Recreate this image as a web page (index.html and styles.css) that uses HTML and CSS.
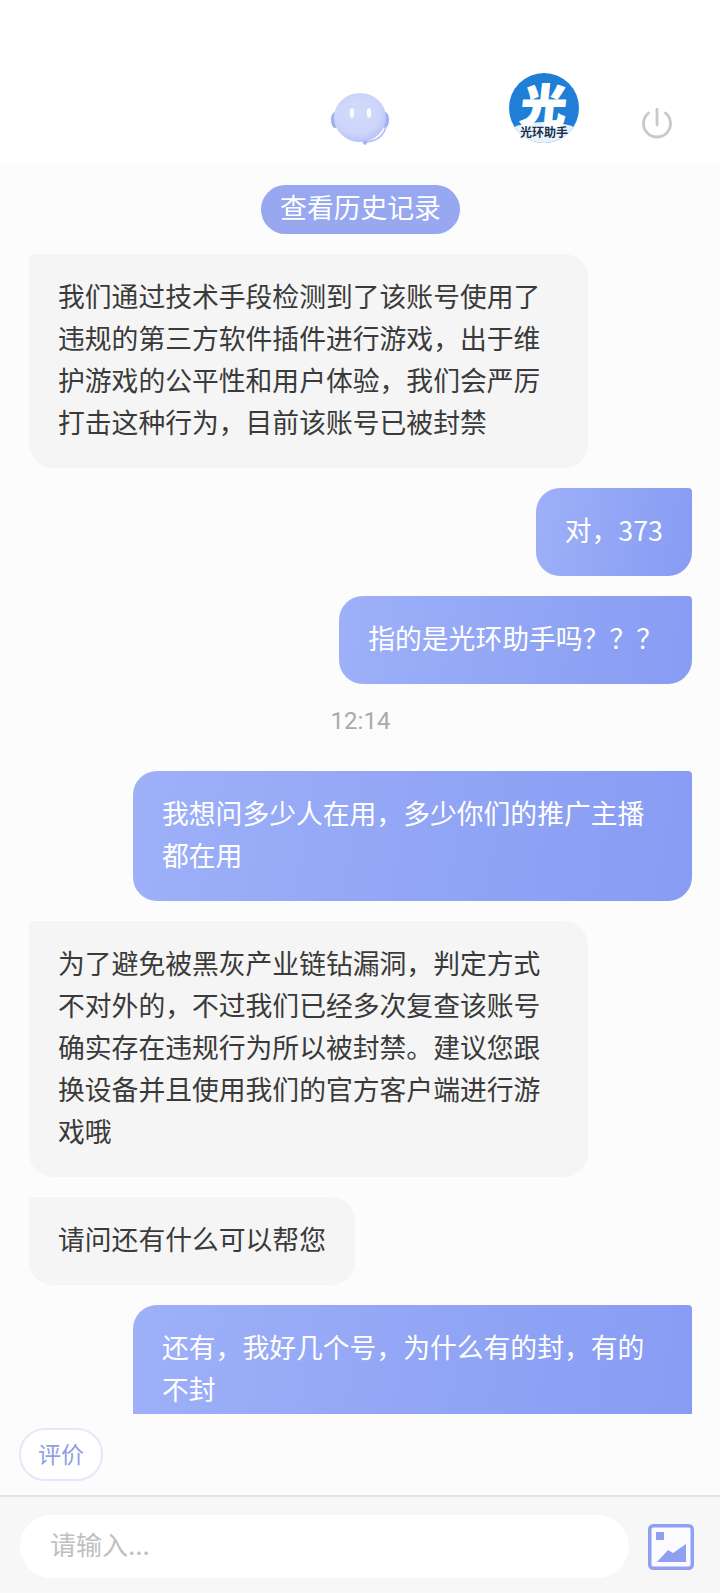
FILE: index.html
```html
<!DOCTYPE html>
<html lang="zh">
<head>
<meta charset="utf-8">
<title>客服</title>
<link rel="stylesheet" href="styles.css">
</head>
<body>
<div class="app">
  <header class="header">
    <svg class="robot" width="60" height="54" viewBox="0 0 60 54">
      <defs>
        <radialGradient id="rb" cx="45%" cy="40%" r="62%">
          <stop offset="0" stop-color="#d3dafb"/>
          <stop offset="0.7" stop-color="#ccd5fa"/>
          <stop offset="1" stop-color="#b7c3f6"/>
        </radialGradient>
      </defs>
      <ellipse cx="5" cy="28" rx="4" ry="8" fill="#9fb0f1"/>
      <ellipse cx="55" cy="28" rx="4" ry="8" fill="#9fb0f1"/>
      <path d="M56 34C54 44 46 49 36 50" fill="none" stroke="#b3c0f5" stroke-width="1.6"/>
      <ellipse cx="30" cy="25.5" rx="26" ry="24.5" fill="url(#rb)"/>
      <ellipse cx="22" cy="21" rx="2.2" ry="5" fill="#fbfbff"/>
      <ellipse cx="39" cy="21" rx="2.2" ry="5" fill="#fbfbff"/>
      <circle cx="35" cy="50.5" r="2.2" fill="#a6b5f2"/>
    </svg>
    <div class="logo">
      <div class="logo-disc"><div class="logo-band"></div></div>
      <span class="logo-mark">光</span>
      <span class="logo-name">光环助手</span>
    </div>
    <svg class="power" width="32" height="32" viewBox="0 0 32 32">
      <path d="M7.5 6A13.5 13.5 0 1 0 24.5 6" fill="none" stroke="#c9c9c9" stroke-width="2.8" stroke-linecap="round"/>
      <path d="M16 2.5V18" fill="none" stroke="#c9c9c9" stroke-width="2.8" stroke-linecap="round"/>
    </svg>
  </header>

  <main class="chat">
    <button class="history">查看历史记录</button>
    <div class="msg left">我们通过技术手段检测到了该账号使用了违规的第三方软件插件进行游戏，出于维护游戏的公平性和用户体验，我们会严厉打击这种行为，目前该账号已被封禁</div>
    <div class="msg right">对，373</div>
    <div class="msg right">指的是光环助手吗？？？</div>
    <div class="time">12:14</div>
    <div class="msg right">我想问多少人在用，多少你们的推广主播都在用</div>
    <div class="msg left">为了避免被黑灰产业链钻漏洞，判定方式不对外的，不过我们已经多次复查该账号确实存在违规行为所以被封禁。建议您跟换设备并且使用我们的官方客户端进行游戏哦</div>
    <div class="msg left">请问还有什么可以帮您</div>
    <div class="msg right">还有，我好几个号，为什么有的封，有的不封</div>
  </main>

  <div class="actions">
    <button class="rate">评价</button>
  </div>

  <footer class="footer">
    <div class="input">请输入...</div>
    <svg class="pic" width="46" height="46" viewBox="0 0 46 46">
      <rect x="1.75" y="1.75" width="42.5" height="42.5" rx="3.5" fill="#fbfbff" stroke="#8fa0f3" stroke-width="3.5"/>
      <rect x="8" y="8" width="8" height="8" fill="#8fa0f3"/>
      <path d="M9 38L20 26L25 29L38 20V38Z" fill="#8fa0f3"/>
    </svg>
  </footer>
</div>
</body>
</html>
```

FILE: styles.css
```css
* { box-sizing: border-box; }
html, body { margin: 0; padding: 0; }
body {
  font-family: "Noto Sans CJK SC", "Noto Sans", sans-serif;
  background: #fcfcfc;
  color: #3a3a3a;
}
.app {
  width: 720px;
  height: 1593px;
  display: flex;
  flex-direction: column;
  overflow: hidden;
}
.header {
  height: 165px;
  flex: none;
  background: #fff;
  display: flex;
  padding-left: 330px;
  align-items: flex-start;
}
.robot { margin-top: 92px; filter: blur(0.7px); flex: none; }
.logo {
  position: relative;
  width: 70px;
  height: 70px;
  margin-top: 73px;
  margin-left: 119px;
  display: flex;
  justify-content: center;
  flex: none;
}
.logo-disc {
  position: absolute;
  inset: 0;
  border-radius: 50%;
  background: #1f7fd6;
  overflow: hidden;
}
.logo-band {
  position: absolute;
  left: -10px;
  width: 90px;
  bottom: -19px;
  height: 40px;
  border-radius: 50%;
  background: #e8f2fb;
}
.logo-mark {
  position: relative;
  font-size: 46px;
  font-weight: 900;
  line-height: 60px;
  height: 60px;
  color: #fff;
  -webkit-text-stroke: 1.2px #fff;
  transform: skewX(-6deg);
}
.logo-name {
  position: absolute;
  left: 0;
  right: 0;
  bottom: 4px;
  text-align: center;
  font-size: 12px;
  line-height: 14px;
  font-weight: 700;
  color: #1c2f4c;
  white-space: nowrap;
}
.power { margin-top: 107px; margin-left: 62px; flex: none; }

.chat {
  height: 1249px;
  flex: none;
  overflow: hidden;
  display: flex;
  flex-direction: column;
  align-items: flex-start;
  padding: 20px 28px 0 29px;
  font-size: 26.8px;
  line-height: 42px;
}
.history {
  align-self: center;
  margin: 0 0 20px;
  width: 199px;
  height: 49px;
  border: 0;
  padding: 0 0 6px;
  border-radius: 25px;
  background: #97a7f0;
  color: #fff;
  font: inherit;
  line-height: 43px;
  flex: none;
}
.msg {
  max-width: 559px;
  padding: 20.5px 29px 25.5px;
  margin-bottom: 20px;
  flex: none;
}
.left {
  background: #f5f5f5;
  color: #3a3a3a;
  border-radius: 4px 24px 24px 24px;
}
.right {
  align-self: flex-end;
  background: linear-gradient(100deg, #9eb0f8, #879cf3);
  color: #fff;
  border-radius: 24px 4px 24px 24px;
}
.time {
  align-self: center;
  font-size: 24px;
  line-height: 34px;
  color: #aaa;
  margin: 0 0 33px;
  font-family: "Roboto", "Noto Sans CJK SC", sans-serif;
}
.actions {
  height: 83px;
  flex: none;
  padding: 14px 0 0 19px;
  border-bottom: 2px solid #e4e4e4;
}
.rate {
  width: 84px;
  height: 53px;
  border: 2px solid #e6e8f8;
  border-radius: 26px;
  background: #fff;
  color: #8f9fe6;
  font: inherit;
  font-size: 23px;
  line-height: 28px;
  padding: 0 0 4px;
}
.footer {
  flex: 1;
  background: #f7f7f7;
  display: flex;
  align-items: flex-start;
  padding: 18px 26px 0 20px;
  justify-content: space-between;
}
.input {
  width: 609px;
  height: 63px;
  border-radius: 32px;
  background: #fff;
  color: #c0c0c0;
  font-size: 26px;
  line-height: 57px;
  padding-left: 30px;
}
.pic { margin-top: 9px; flex: none; }
```
